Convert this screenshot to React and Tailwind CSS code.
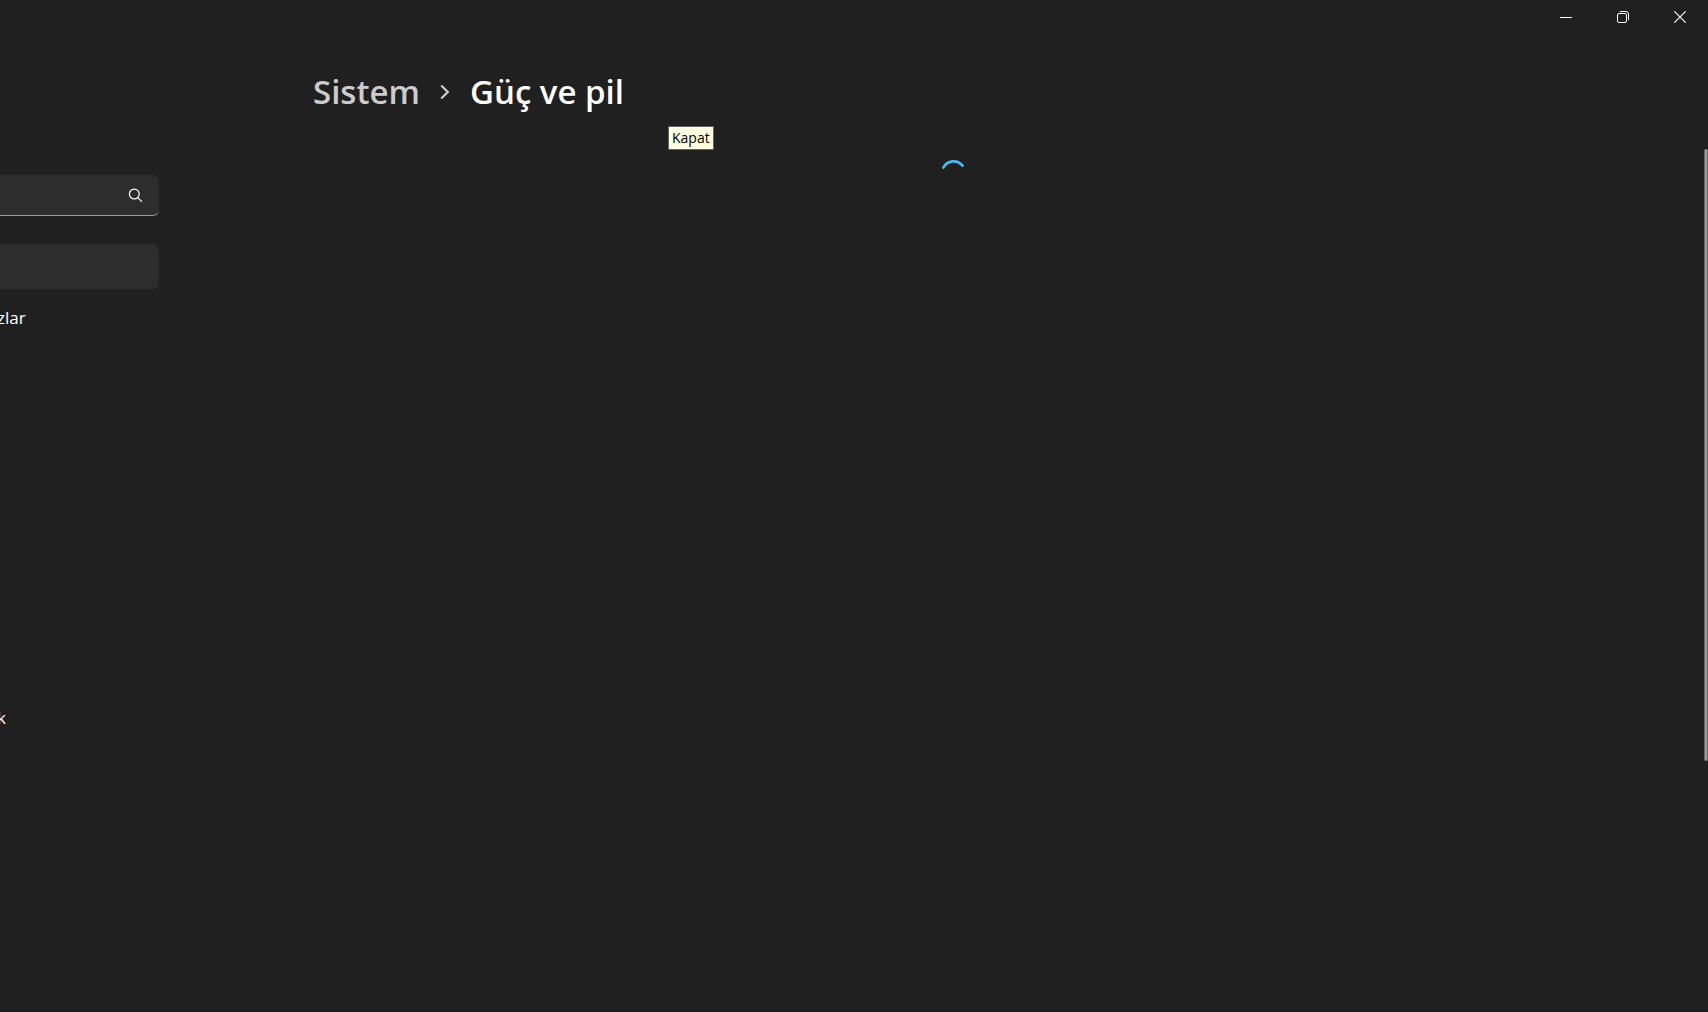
import { useState } from "react";

const navItems = ["", "zlar", "", "", "", "", "", "", "", "k", ""];

function TitleBar() {
  const button = "flex h-8 w-[57px] items-center justify-center hover:bg-white/10";

  return (
    <header className="flex h-9 shrink-0 justify-end">
      <button type="button" aria-label="Simge durumuna küçült" className={button}>
        <svg className="mt-0.5 size-3" viewBox="0 0 12 12" stroke="currentColor">
          <path d="M0 6.5h12" />
        </svg>
      </button>
      <button type="button" aria-label="Önceki boyut" className={button}>
        <svg className="mt-0.5 size-3" viewBox="0 0 12 12" fill="none" stroke="currentColor">
          <rect x="0.5" y="2.5" width="9" height="9" rx="1.5" />
          <path d="M2.8 0.5H9A2.5 2.5 0 0 1 11.5 3v6.2" />
        </svg>
      </button>
      <button type="button" aria-label="Kapat" className={button}>
        <svg className="mt-0.5 size-3" viewBox="0 0 12 12" stroke="currentColor" strokeWidth="1.1">
          <path d="M0.3 0.3l11.4 11.4M11.7 0.3L0.3 11.7" />
        </svg>
      </button>
    </header>
  );
}

function Sidebar() {
  const [query, setQuery] = useState("");

  return (
    <aside className="w-[159px] shrink-0 pt-[139px]">
      <label className="flex h-[41px] items-center rounded-r-md border-b border-[#9a9a9a] bg-[#2d2d2d] pr-4">
        <input
          type="text"
          aria-label="Ayar bulun"
          value={query}
          onChange={(e) => setQuery(e.target.value)}
          className="h-full w-full min-w-0 bg-transparent outline-none"
        />
        <svg className="size-[15px] shrink-0" viewBox="0 0 15 15" fill="none" stroke="currentColor" strokeWidth="1.2">
          <circle cx="6.3" cy="6" r="4.9" />
          <path d="M9.8 9.6l4.2 4.2" />
        </svg>
      </label>

      <nav className="mt-7 flex flex-col gap-[5px]">
        {navItems.map((label, i) => (
          <a
            key={i}
            href="#"
            aria-current={i === 0 ? "page" : undefined}
            className="flex h-[45px] items-center rounded-r-md pt-0.5 text-[17px] aria-[current=page]:bg-[#2d2d2d]"
          >
            <span className="-ml-[3px]">{label}</span>
          </a>
        ))}
      </nav>
    </aside>
  );
}

function Content() {
  return (
    <main className="relative ml-10 flex min-w-0 flex-1 flex-col">
      <div className="mx-auto w-full max-w-[1281px] pt-8">
        <h1 className="flex items-center text-[33px] leading-12 font-semibold">
          <a href="#" className="text-[#cccccc]">Sistem</a>
          <svg className="mx-5 h-4 w-2.5" viewBox="0 0 10 16" fill="none" stroke="#cccccc" strokeWidth="2.2">
            <path d="M1.2 1.5L7.8 8l-6.6 6.5" />
          </svg>
          <span>Güç ve pil</span>
        </h1>
      </div>

      {/* Tooltip left over from the title bar */}
      <div
        role="tooltip"
        className="absolute top-[90px] left-[469px] flex h-6 items-center border border-[#646464] bg-[#ffffe1] px-[3px] text-sm text-black"
      >
        Kapat
      </div>

      <div className="relative mt-[33px] flex flex-1 justify-center pt-[11px]">
        {/* Progress ring */}
        <svg role="status" aria-label="Yükleniyor" className="size-[26px]" viewBox="0 0 26 26" fill="none">
          <path d="M2.4 7.6A11.4 11.4 0 0 1 21.6 5.8" stroke="#4cb8f5" strokeWidth="2.6" strokeLinecap="round" />
        </svg>
        <div className="absolute top-0 right-0 h-[71%] w-1 rounded-full border-x border-[#6a6a6a] bg-[#9a9a9a]" />
      </div>
    </main>
  );
}

export default function App() {
  return (
    <div className="flex min-h-screen flex-col overflow-hidden border-b border-[#1b171b] bg-[#202020] font-['Open_Sans',sans-serif] text-white">
      <TitleBar />
      <div className="flex flex-1">
        <Sidebar />
        <Content />
      </div>
    </div>
  );
}
